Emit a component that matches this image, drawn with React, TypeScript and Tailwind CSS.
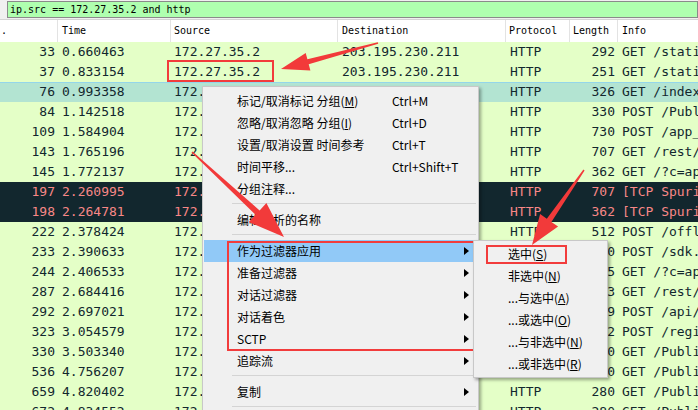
import React from "react";

type Row = { no: string; time: string; len: string; info: string; kind?: "sel" | "bad" };

const rows: Row[] = [
  { no: "33", time: "0.660463", len: "292", info: "GET /static/js/common.js HTTP/1.1" },
  { no: "37", time: "0.833154", len: "251", info: "GET /static/css/main.css HTTP/1.1" },
  { no: "76", time: "0.993358", len: "326", info: "GET /index.html HTTP/1.1", kind: "sel" },
  { no: "84", time: "1.142518", len: "330", info: "POST /Public/api HTTP/1.1" },
  { no: "109", time: "1.584904", len: "730", info: "POST /app_log HTTP/1.1" },
  { no: "143", time: "1.765196", len: "707", info: "GET /rest/v1 HTTP/1.1" },
  { no: "145", time: "1.772137", len: "362", info: "GET /?c=api HTTP/1.1" },
  { no: "197", time: "2.260995", len: "707", info: "[TCP Spurious Retransmission]", kind: "bad" },
  { no: "198", time: "2.264781", len: "362", info: "[TCP Spurious Retransmission]", kind: "bad" },
  { no: "222", time: "2.378424", len: "512", info: "POST /offline HTTP/1.1" },
  { no: "233", time: "2.390633", len: "330", info: "POST /sdk.php HTTP/1.1" },
  { no: "244", time: "2.406533", len: "365", info: "GET /?c=api HTTP/1.1" },
  { no: "287", time: "2.684416", len: "703", info: "GET /rest/v1 HTTP/1.1" },
  { no: "292", time: "2.697021", len: "519", info: "POST /api/report HTTP/1.1" },
  { no: "323", time: "3.054579", len: "512", info: "POST /register HTTP/1.1" },
  { no: "330", time: "3.503340", len: "280", info: "GET /Public/img HTTP/1.1" },
  { no: "536", time: "4.756207", len: "280", info: "GET /Public/img HTTP/1.1" },
  { no: "659", time: "4.820402", len: "280", info: "GET /Public/img HTTP/1.1" },
  { no: "672", time: "4.834552", len: "280", info: "GET /Public/img HTTP/1.1" },
];

const mono = { fontFamily: '"DejaVu Sans Mono", monospace' };

function arrowPts(x1: number, y1: number, x2: number, y2: number, hl: number, hw: number, t0: number, t1: number) {
  const dx = x2 - x1;
  const dy = y2 - y1;
  const L = Math.sqrt(dx * dx + dy * dy);
  const ux = dx / L;
  const uy = dy / L;
  const nx = -uy;
  const ny = ux;
  const bx = x2 - ux * hl;
  const by = y2 - uy * hl;
  const p = (x: number, y: number) => `${x.toFixed(1)},${y.toFixed(1)}`;
  return [
    p(x1 + (nx * t0) / 2, y1 + (ny * t0) / 2),
    p(bx + (nx * t1) / 2, by + (ny * t1) / 2),
    p(bx + (nx * hw) / 2, by + (ny * hw) / 2),
    p(x2, y2),
    p(bx - (nx * hw) / 2, by - (ny * hw) / 2),
    p(bx - (nx * t1) / 2, by - (ny * t1) / 2),
    p(x1 - (nx * t0) / 2, y1 - (ny * t0) / 2),
  ].join(" ");
}

function Tri() {
  return (
    <svg width="5" height="8" viewBox="0 0 5 8" className="block">
      <polygon points="0,0 5,4 0,8" fill="#000" />
    </svg>
  );
}

type MI = { label: React.ReactNode; sc?: string; sub?: boolean; hl?: boolean } | "sep";

const menu: MI[] = [
  { label: <>标记/取消标记 分组(<u>M</u>)</>, sc: "Ctrl+M" },
  { label: <>忽略/取消忽略 分组(<u>I</u>)</>, sc: "Ctrl+D" },
  { label: "设置/取消设置 时间参考", sc: "Ctrl+T" },
  { label: "时间平移...", sc: "Ctrl+Shift+T" },
  { label: "分组注释..." },
  "sep",
  { label: "编辑解析的名称" },
  "sep",
  { label: "作为过滤器应用", sub: true, hl: true },
  { label: "准备过滤器", sub: true },
  { label: "对话过滤器", sub: true },
  { label: "对话着色", sub: true },
  { label: "SCTP", sub: true },
  { label: "追踪流", sub: true },
  "sep",
  { label: "复制", sub: true },
  "sep",
];

const submenu: React.ReactNode[] = [
  <>选中(<u>S</u>)</>,
  <>非选中(<u>N</u>)</>,
  <>...与选中(<u>A</u>)</>,
  <>...或选中(<u>O</u>)</>,
  <>...与非选中(<u>N</u>)</>,
  <>...或非选中(<u>R</u>)</>,
];

const cjk = { fontFamily: '"Noto Sans CJK SC", "Noto Sans", sans-serif' };

export default function App() {
  return (
    <div className="relative w-[698px] h-[410px] overflow-hidden bg-[#e4ffc7]">
      {/* filter bar */}
      <div className="h-[20px] bg-[#f0f0f0] border-b border-[#d4d4d4] pl-[7px] pt-[1px]">
        <div
          className="h-[17px] border border-[#8a8a8a] bg-[#afffaf] pl-[2px] text-[10px] leading-[15px] text-black whitespace-pre"
          style={mono}
        >
          ip.src == 172.27.35.2 and http
        </div>
      </div>
      {/* header */}
      <div className="flex h-[22px] bg-white text-[10px] leading-[22px] text-black" style={mono}>
        <div className="w-[58px] border-r border-[#e3e3e3] pl-[1px]">.</div>
        <div className="w-[113px] border-r border-[#e3e3e3] pl-[4px]">Time</div>
        <div className="w-[167px] border-r border-[#e3e3e3] pl-[3px]">Source</div>
        <div className="w-[168px] border-r border-[#e3e3e3] pl-[4px]">Destination</div>
        <div className="w-[64px] border-r border-[#e3e3e3] pl-[3px]">Protocol</div>
        <div className="w-[48px] border-r border-[#e3e3e3] pl-[3px]">Length</div>
        <div className="flex-1 pl-[4px]">Info</div>
      </div>
      {/* rows */}
      <div className="text-[13px] leading-[20px]" style={mono}>
        {rows.map((r) => {
          const cls =
            r.kind === "bad"
              ? "bg-[#12272e] text-[#f78787]"
              : r.kind === "sel"
              ? "bg-[#b3e4d2] text-[#12272e] shadow-[inset_0_1px_0_#94d6ea]"
              : "bg-[#e4ffc7] text-[#12272e]";
          return (
            <div key={r.no} className={`flex h-[20px] whitespace-nowrap ${cls}`}>
              <div className="w-[58px] pr-[3px] text-right">{r.no}</div>
              <div className="w-[113px] pl-[4px]">{r.time}</div>
              <div className="w-[167px] pl-[3px]">172.27.35.2</div>
              <div className="w-[168px] pl-[4px]">203.195.230.211</div>
              <div className="w-[64px] pl-[4px]">HTTP</div>
              <div className="w-[48px] pr-[3px] text-right">{r.len}</div>
              <div className="flex-1 pl-[4px] overflow-hidden">{r.info}</div>
            </div>
          );
        })}
      </div>

      {/* red box around source */}
      <div className="absolute left-[167px] top-[60px] w-[107px] h-[22px] border-[2.5px] border-[#f23c3c]" />

      {/* context menu */}
      <div
        className="absolute left-[202px] top-[86px] w-[277px] h-[340px] bg-[#f0f0f0] border border-[#c8c8c8] shadow-[2px_2px_3px_rgba(0,0,0,0.35)] pt-[3px] text-[12px] text-black"
        style={cjk}
      >
        {menu.map((m, i) =>
          m === "sep" ? (
            <div key={i} className="h-[9px] pt-[3px] pl-[29px] pr-[2px]">
              <div className="h-[1px] bg-[#d4d4d4]" />
            </div>
          ) : (
            <div
              key={i}
              className={`flex items-center h-[22px] mx-[1px] pl-[33px] ${m.hl ? "bg-[#91c9f7]" : ""}`}
            >
              <div className="w-[155px] whitespace-nowrap">{m.label}</div>
              <div className="w-[72px] whitespace-nowrap">{m.sc ?? ""}</div>
              {m.sub ? <Tri /> : null}
            </div>
          )
        )}
      </div>

      {/* red box around submenu group */}
      <div className="absolute left-[227px] top-[241px] w-[252px] h-[110px] border-[2.5px] border-[#f23c3c]" />

      {/* submenu */}
      <div
        className="absolute left-[473px] top-[240px] w-[135px] bg-[#f0f0f0] border border-[#c8c8c8] shadow-[2px_2px_3px_rgba(0,0,0,0.35)] py-[2px] text-[12px] text-black"
        style={cjk}
      >
        {submenu.map((s, i) => (
          <div key={i} className="flex items-center h-[22px] pl-[34px] whitespace-nowrap">
            {s}
          </div>
        ))}
      </div>
      <div className="absolute left-[486px] top-[245px] w-[81px] h-[19px] border-2 border-[#f23c3c]" />

      {/* arrows */}
      <svg className="absolute left-0 top-0 pointer-events-none" width="698" height="410" viewBox="0 0 698 410">
        <polygon points={arrowPts(378, 43, 281, 69, 28, 18, 1.5, 5)} fill="#f23a3a" />
        <polygon points={arrowPts(192, 152, 284, 237, 36, 26, 1.5, 6)} fill="#f23a3a" />
        <polygon points={arrowPts(584, 170, 532, 245, 30, 22, 1.5, 5.5)} fill="#f23a3a" />
      </svg>
    </div>
  );
}
